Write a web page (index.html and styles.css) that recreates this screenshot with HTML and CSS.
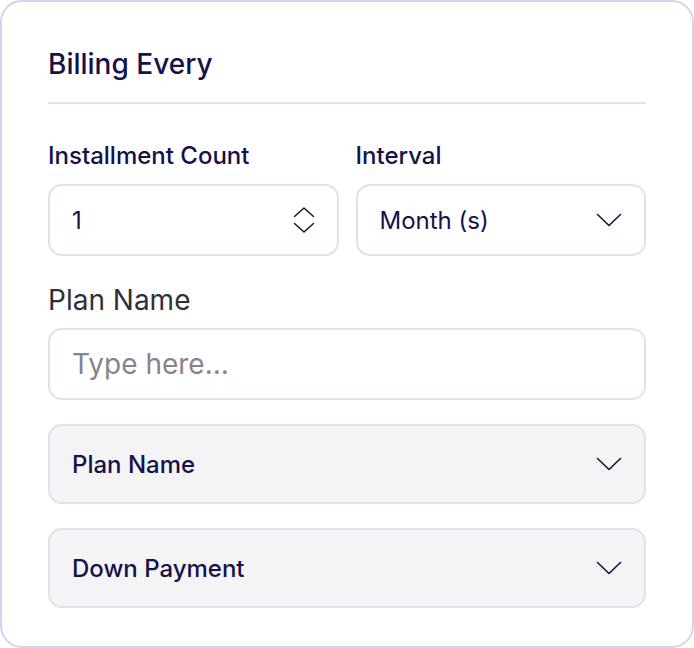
FILE: index.html
```html
<!DOCTYPE html>
<html lang="en">
<head>
    <meta charset="UTF-8">
    <meta name="viewport" content="width=device-width, initial-scale=1.0">
    <title>Billing Every</title>
    <link rel="stylesheet" href="styles.css">
</head>
<body>
    <div class="card">
        <div class="card-title">Billing Every</div>
        <div class="row">
            <div class="field">
                <label for="count">Installment Count</label>
                <div class="box">
                    <span class="value">1</span>
                    <svg class="icon" width="22" height="28" viewBox="0 0 22 28" fill="none" stroke="#14124a" stroke-width="1.5" stroke-linecap="round" stroke-linejoin="round">
                        <path d="M1.5 10.5 L11 2 L20.5 10.5"/>
                        <path d="M1.5 17.5 L11 26 L20.5 17.5"/>
                    </svg>
                </div>
            </div>
            <div class="field">
                <label for="interval">Interval</label>
                <div class="box">
                    <span class="value">Month (s)</span>
                    <svg class="icon" width="26" height="14" viewBox="0 0 26 14" fill="none" stroke="#14124a" stroke-width="1.6" stroke-linecap="round" stroke-linejoin="round">
                        <path d="M1.5 1.5 L13 12.5 L24.5 1.5"/>
                    </svg>
                </div>
            </div>
        </div>
        <div class="field">
            <label class="plain-label" for="planName">Plan Name</label>
            <input class="box text-input" type="text" id="planName" placeholder="Type here...">
        </div>
        <div class="select">
            <span>Plan Name</span>
            <svg class="icon" width="26" height="14" viewBox="0 0 26 14" fill="none" stroke="#14124a" stroke-width="1.6" stroke-linecap="round" stroke-linejoin="round">
                <path d="M1.5 1.5 L13 12.5 L24.5 1.5"/>
            </svg>
        </div>
        <div class="select">
            <span>Down Payment</span>
            <svg class="icon" width="26" height="14" viewBox="0 0 26 14" fill="none" stroke="#14124a" stroke-width="1.6" stroke-linecap="round" stroke-linejoin="round">
                <path d="M1.5 1.5 L13 12.5 L24.5 1.5"/>
            </svg>
        </div>
    </div>
</body>
</html>
```

FILE: styles.css
```css
body {
    font-family: Inter, "Noto Sans", sans-serif;
    background-color: white;
    margin: 0;
    color: #14124a;
}
.card {
    width: 694px;
    height: 648px;
    box-sizing: border-box;
    border: 2px solid #d4d2ef;
    border-radius: 22px;
    padding: 0 46px;
}
.card-title {
    font-size: 28px;
    font-weight: 500;
    line-height: 32px;
    padding-top: 46px;
    padding-bottom: 22px;
    border-bottom: 2px solid #e1dfee;
}
.row {
    display: flex;
    gap: 17px;
    margin-top: 38px;
}
.row .field {
    flex: 1;
}
.field label {
    display: block;
    font-size: 24px;
    font-weight: 500;
    line-height: 28px;
    margin-bottom: 14px;
}
.field .plain-label {
    color: #2f2f3a;
    font-size: 28px;
    font-weight: 400;
    line-height: 30px;
    margin-top: 29px;
    margin-bottom: 13px;
}
.box {
    display: flex;
    align-items: center;
    justify-content: space-between;
    height: 72px;
    box-sizing: border-box;
    border: 2px solid #e2e0ee;
    border-radius: 14px;
    padding: 0 22px;
    font-size: 24px;
}
.text-input {
    width: 100%;
    font-family: inherit;
    font-size: 28px;
    color: #14124a;
    outline: none;
}
.text-input::placeholder {
    color: #85848f;
}
.select {
    display: flex;
    align-items: center;
    justify-content: space-between;
    height: 80px;
    box-sizing: border-box;
    margin-top: 24px;
    background-color: #f4f4f5;
    border: 2px solid #e2e0ee;
    border-radius: 14px;
    padding: 0 22px;
    font-size: 24px;
    font-weight: 500;
}
```
